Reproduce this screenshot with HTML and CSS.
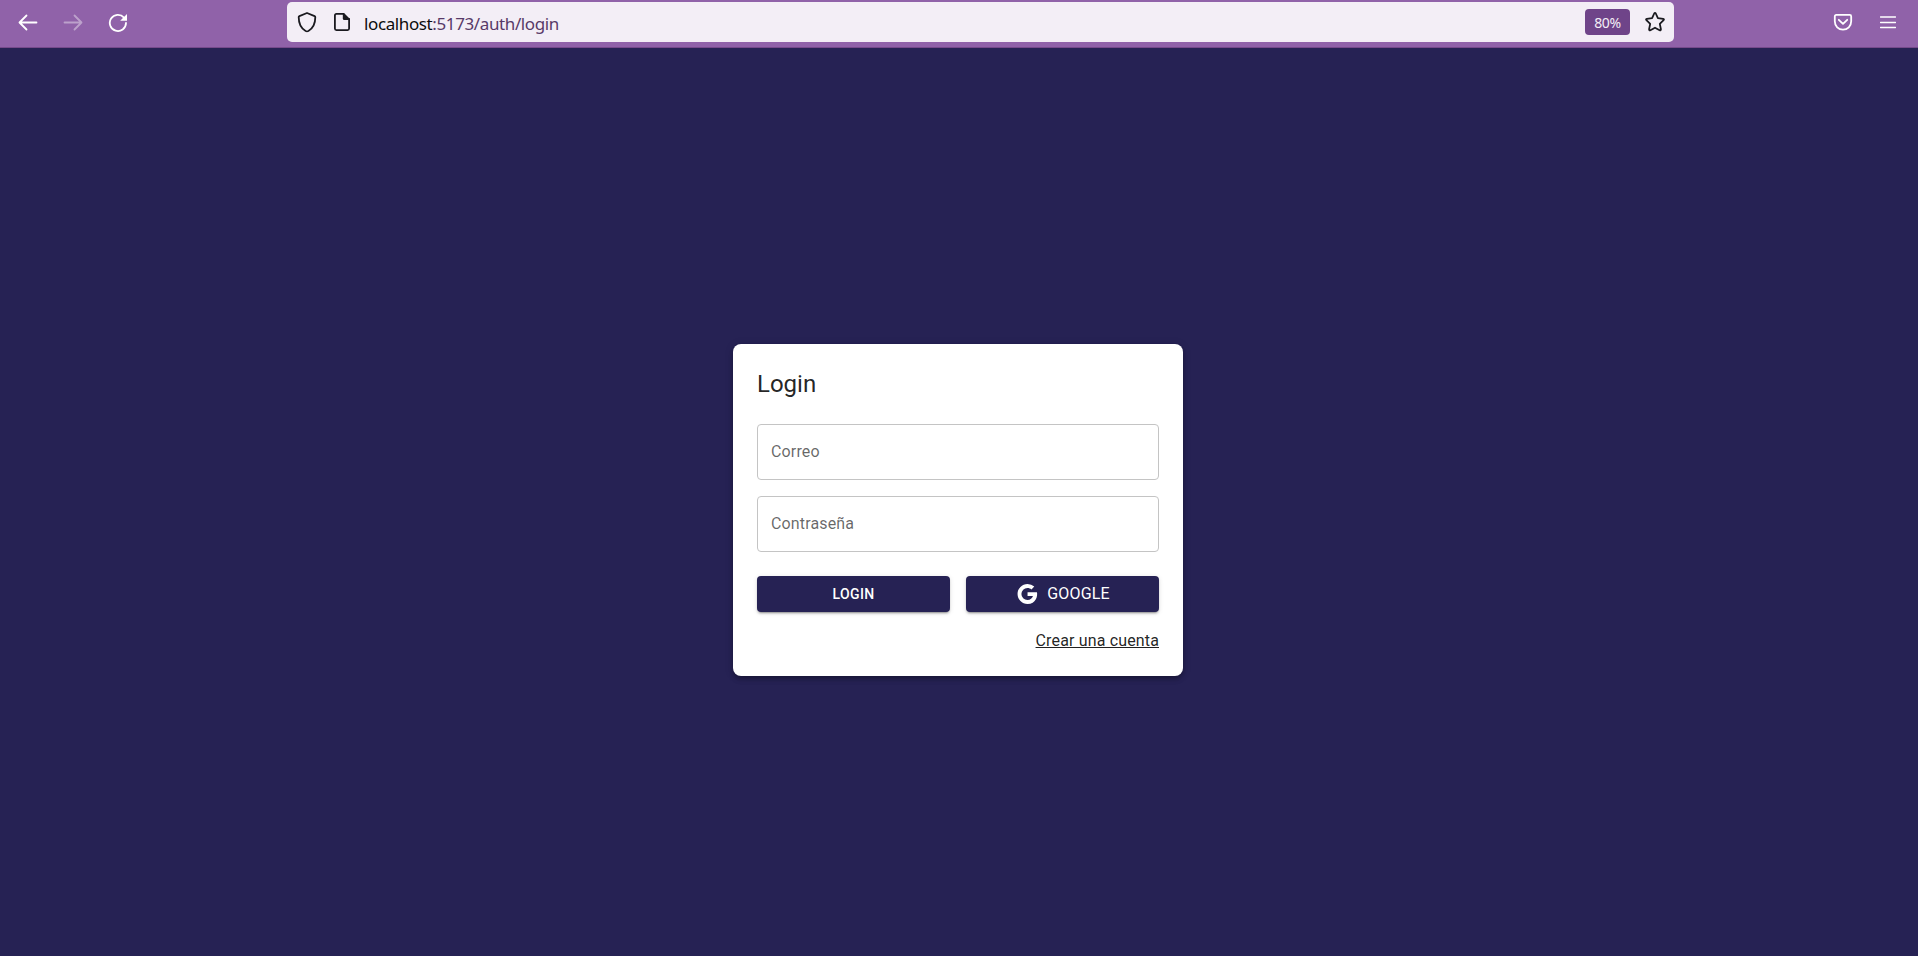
FILE: index.html
```html
<!DOCTYPE html>
<html lang="es">
<head>
<meta charset="utf-8">
<title>Login</title>
<link rel="stylesheet" href="styles.css">
</head>
<body>
<header class="toolbar">
  <nav class="nav">
    <svg class="icon" width="20" height="20" viewBox="0 0 20 20"><path d="M18.500 9.500H1.700M8.500 2.500L1.500 9.500l7 7"/></svg>
    <svg class="icon icon-disabled" width="20" height="20" viewBox="0 0 20 20"><path d="M1.500 9.500h17M11.500 2.500l7 7-7 7"/></svg>
    <svg class="icon" width="20" height="20" viewBox="0 0 20 20"><path d="M18 10A8.100 8.100 0 1 1 16 4.600"/><path class="solid" d="M19 1v6.800h-6.800z"/></svg>
  </nav>
  <div class="urlbar">
    <svg class="icon dark" width="20" height="22" viewBox="0 0 20 22"><path d="M10 2L2.400 5.100Q1.700 5.400 1.700 6.100C1.700 12.500 4 17.500 8.600 20q1.400.7 2.800 0C16 17.500 18.300 12.500 18.300 6.100Q18.300 5.400 17.600 5.100Z"/></svg>
    <svg class="icon dark page" width="18" height="20" viewBox="0 0 18 20"><path d="M10.500 1.900H3.400Q1.900 1.900 1.900 3.400V16.600Q1.900 18.100 3.400 18.100H14.600Q16.100 18.100 16.100 16.600V7"/><path class="solid" d="M9.800 1H11L17 7V8H11.300Q9.800 8 9.800 6.500Z"/></svg>
    <span class="url"><span class="host">localhost</span><span class="path">:5173/auth/login</span></span>
    <span class="zoom">80%</span>
    <svg class="icon dark star" width="22" height="22" viewBox="0 0 22 22"><path d="M10.200 2.500Q11 1.300 11.800 2.500L13.900 7.200L19.200 7.800Q20.500 8.200 19.600 9.200L15.800 12.900L16.900 18.300Q16.900 19.700 15.600 19.200L11 16.700L6.400 19.200Q5.100 19.700 5.100 18.300L6.200 12.900L2.400 9.200Q1.500 8.200 2.800 7.800L8.100 7.200Z"/></svg>
  </div>
  <div class="actions">
    <svg class="icon" width="20" height="18" viewBox="0 0 20 18"><path d="M3.300 1.900H16.700Q18.200 1.900 18.200 3.400V8.300C18.200 13.300 14.500 16.600 10 16.600S1.800 13.300 1.800 8.300V3.400Q1.800 1.900 3.300 1.900ZM5.800 6.800L10 10.800L14.200 6.800"/></svg>
    <svg class="icon thin" width="16" height="14" viewBox="0 0 16 14"><path d="M.5 2h15M.5 7.500h15M.5 12.500h15"/></svg>
  </div>
</header>
<main class="content">
  <form class="card">
    <h1 class="title">Login</h1>
    <div class="fields">
      <label class="field">Correo</label>
      <label class="field">Contraseña</label>
    </div>
    <div class="buttons">
      <button class="button" type="button">LOGIN</button>
      <button class="button google" type="button">
        <svg width="24" height="24" viewBox="0 0 24 24"><path fill="currentColor" d="M12.545 10.239v3.821h5.445c-.712 2.315-2.647 3.972-5.445 3.972a6.033 6.033 0 1 1 0-12.064c1.498 0 2.866.549 3.921 1.453l2.814-2.814A9.969 9.969 0 0 0 12.545 2C7.021 2 2.543 6.477 2.543 12s4.478 10 10.002 10c8.396 0 10.249-7.850 9.426-11.748z"/></svg>
        <span>GOOGLE</span>
      </button>
    </div>
    <a class="link">Crear una cuenta</a>
  </form>
</main>
</body>
</html>
```
FILE: styles.css
```css
* { box-sizing: border-box; }
body {
  margin: 0;
  height: 956px;
  display: flex;
  flex-direction: column;
  background: #262254;
  font-family: Roboto, "Liberation Sans", sans-serif;
  overflow: hidden;
}
.toolbar {
  height: 48px;
  flex: none;
  display: flex;
  align-items: flex-start;
  background: #9062a9;
  border-bottom: 1px solid #764a8b;
}
.nav {
  width: 287px;
  padding: 13px 0 0 18px;
  display: flex;
  gap: 25px;
}
.icon {
  flex: none;
  fill: none;
  stroke: #fff;
  stroke-width: 1.8;
  stroke-linecap: round;
  stroke-linejoin: round;
}
.icon-disabled { opacity: .4; }
.solid { fill: #fff; stroke: none; }
.dark { stroke: #1a1a1f; }
.dark .solid { fill: #1a1a1f; }
.thin { stroke-width: 1.5; }
.urlbar {
  width: 1387px;
  height: 40px;
  margin-top: 2px;
  padding: 0 8px 0 10px;
  display: flex;
  align-items: center;
  background: #f3eef6;
  border-radius: 5px;
}
.page { margin-left: 16px; }
.url {
  flex: 1;
  margin-left: 13px;
  padding-top: 3px;
  display: flex;
  font: 17px/24px "Noto Sans", sans-serif;
  letter-spacing: -.39px;
  color: #583a68;
}
.host { color: #0c0c0d; }
.zoom {
  width: 45px;
  height: 26px;
  margin-right: 14px;
  border-radius: 4px;
  background: #6f4489;
  color: #f3eef6;
  font: 14px/28px "Noto Sans", sans-serif;
  letter-spacing: -.3px;
  text-align: center;
}
.actions {
  flex: 1;
  display: flex;
  justify-content: flex-end;
  align-items: center;
  gap: 27px;
  padding: 13px 22px 0 0;
}
.content {
  flex: 1;
  display: flex;
  justify-content: center;
  padding-top: 296px;
  padding-right: 2px;
}
.card {
  width: 450px;
  height: 332px;
  padding: 24px;
  background: #fff;
  border-radius: 8px;
  box-shadow: 0 2px 4px -1px rgba(0,0,0,.2), 0 4px 5px rgba(0,0,0,.14), 0 1px 10px rgba(0,0,0,.12);
  color: rgba(0,0,0,.87);
  display: flex;
  flex-direction: column;
}
.title {
  margin: 0 0 24px;
  font-size: 24px;
  font-weight: 400;
  line-height: 32px;
}
.fields { display: grid; gap: 16px; }
.field {
  height: 56px;
  padding: 0 13px;
  border: 1px solid #c4c4c4;
  border-radius: 4px;
  font-size: 16px;
  line-height: 54px;
  letter-spacing: .15px;
  color: rgba(0,0,0,.6);
}
.buttons {
  margin-top: 24px;
  display: grid;
  grid-template-columns: 1fr 1fr;
  gap: 16px;
}
.button {
  height: 36px;
  padding: 0;
  display: flex;
  align-items: center;
  justify-content: center;
  border: 0;
  border-radius: 4px;
  background: #262254;
  color: #fff;
  font: 500 14px/24px Roboto, sans-serif;
  letter-spacing: .4px;
  box-shadow: 0 3px 1px -2px rgba(0,0,0,.2), 0 2px 2px rgba(0,0,0,.14), 0 1px 5px rgba(0,0,0,.12);
}
.google {
  gap: 8px;
  font-size: 16px;
  font-weight: 400;
  letter-spacing: .15px;
}
.link {
  align-self: flex-end;
  margin-top: 17px;
  font-size: 16px;
  line-height: 24px;
  letter-spacing: .15px;
  text-decoration: underline;
}
```
